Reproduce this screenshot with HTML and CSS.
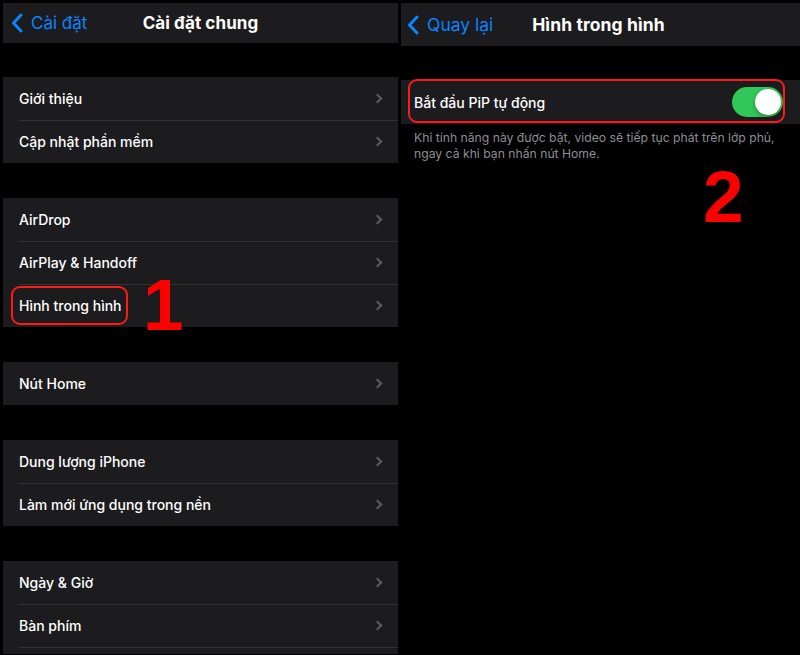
FILE: index.html
```html
<!DOCTYPE html>
<html lang="vi">
<head>
<meta charset="utf-8">
<link rel="stylesheet" href="styles.css">
</head>
<body>
<div class="screen">
  <section class="panel left">
    <header class="nav">
      <a class="back"><svg class="back-chev" viewBox="0 0 12 20" width="12" height="20"><path d="M10 2 L2.5 10 L10 18" fill="none" stroke="#0a84ff" stroke-width="3" stroke-linecap="round" stroke-linejoin="round"/></svg><span>Cài đặt</span></a>
      <h1 class="title">Cài đặt chung</h1>
    </header>
    <div class="group first">
      <div class="row"><span>Giới thiệu</span><i class="chev"></i></div>
      <div class="row"><span>Cập nhật phần mềm</span><i class="chev"></i></div>
    </div>
    <div class="group">
      <div class="row"><span>AirDrop</span><i class="chev"></i></div>
      <div class="row"><span>AirPlay &amp; Handoff</span><i class="chev"></i></div>
      <div class="row mark-row"><span>Hình trong hình</span><i class="chev"></i>
        <div class="mark mark-left"></div>
        <div class="step step-1">1</div>
      </div>
    </div>
    <div class="group">
      <div class="row"><span>Nút Home</span><i class="chev"></i></div>
    </div>
    <div class="group">
      <div class="row"><span>Dung lượng iPhone</span><i class="chev"></i></div>
      <div class="row"><span>Làm mới ứng dụng trong nền</span><i class="chev"></i></div>
    </div>
    <div class="group">
      <div class="row"><span>Ngày &amp; Giờ</span><i class="chev"></i></div>
      <div class="row"><span>Bàn phím</span><i class="chev"></i></div>
      <div class="row row-stub"></div>
    </div>
  </section>
  <section class="panel right">
    <header class="nav nav-r">
      <a class="back"><svg class="back-chev" viewBox="0 0 12 20" width="12" height="20"><path d="M10 2 L2.5 10 L10 18" fill="none" stroke="#0a84ff" stroke-width="3" stroke-linecap="round" stroke-linejoin="round"/></svg><span>Quay lại</span></a>
      <h1 class="title">Hình trong hình</h1>
    </header>
    <div class="group first-r">
      <div class="row row-r"><span>Bắt đầu PiP tự động</span>
        <div class="toggle"><div class="knob"></div></div>
        <div class="mark mark-right"></div>
      </div>
    </div>
    <p class="footer">Khi tính năng này được bật, video sẽ tiếp tục phát trên lớp phủ, ngay cả khi bạn nhấn nút Home.</p>
    <div class="step-wrap"><div class="step step-2">2</div></div>
  </section>
</div>
</body>
</html>
```
FILE: styles.css
```css
* { box-sizing: border-box; }
html, body { margin: 0; padding: 0; background: #000; }
body {
  width: 800px;
  height: 655px;
  overflow: hidden;
  font-family: Inter, "Noto Sans", "Liberation Sans", sans-serif;
  color: #fff;
}
.screen {
  display: flex;
  align-items: flex-start;
  gap: 3px;
  padding: 3px 0 0 3px;
  height: 655px;
  overflow: hidden;
}
.panel { display: flex; flex-direction: column; }
.panel > * { flex-shrink: 0; }
.left { width: 395px; }
.right { width: 399px; flex: 1; }

.nav {
  position: relative;
  height: 40px;
  background: #1c1c1e;
  display: flex;
  align-items: center;
  justify-content: center;
}
.nav-r { height: 43px; }
.back {
  position: absolute;
  left: 8px;
  top: 0;
  bottom: 0;
  display: flex;
  align-items: center;
  gap: 8px;
  color: #0a84ff;
  font-size: 17px;
  font-weight: 400;
}
.nav-r .back { left: 6px; gap: 8px; font-size: 17.5px; }
.back-chev { display: block; }
.title {
  margin: 0;
  font-size: 17px;
  font-weight: 700;
  letter-spacing: 0.1px;
}
.nav-r .title { font-size: 17.5px; margin-right: 4px; }

.group {
  background: #1c1c1e;
  margin-top: 35px;
}
.group.first { margin-top: 34px; }
.group.first-r { margin-top: 34px; }

.row {
  position: relative;
  height: 43px;
  display: flex;
  align-items: center;
  justify-content: space-between;
  padding: 0 14px 0 16px;
  font-size: 14px;
  font-weight: 500;
}
.row.row-stub { height: 7px; }
.row + .row::before {
  content: "";
  position: absolute;
  left: 16px;
  right: 0;
  top: 0;
  height: 1px;
  background: #323234;
}
.chev {
  display: block;
  width: 7px;
  height: 7px;
  border-right: 2px solid #5b5b5f;
  border-top: 2px solid #5b5b5f;
  transform: rotate(45deg);
  margin-right: 3px;
}

.row-r { height: 44px; padding: 0 17px 0 13px; font-size: 14px; }
.toggle {
  width: 51px;
  height: 30px;
  border-radius: 15px;
  background: #32c759;
  position: relative;
}
.knob {
  position: absolute;
  right: 2px;
  top: 2px;
  width: 26px;
  height: 26px;
  border-radius: 50%;
  background: #fff;
  box-shadow: 0 2px 4px rgba(0,0,0,0.3);
}

.mark {
  position: absolute;
  border: 2.5px solid #ff1a1a;
  border-radius: 9px;
  pointer-events: none;
}
.mark-left { left: 8px; top: 2px; width: 117px; height: 39px; }
.mark-right { left: 7px; top: -1px; width: 377px; height: 44px; }

.footer {
  margin: 6px 0 0;
  padding: 0 16px 0 13px;
  font-size: 12.2px;
  line-height: 16px;
  color: #8e8e93;
  font-weight: 400;
}

.step {
  position: absolute;
  font-family: "Liberation Sans", Arial, sans-serif;
  font-weight: 700;
  font-size: 73px;
  line-height: 1;
  color: #ff0000;
}
.step-1 { left: 140px; top: -16px; }
.step-wrap { position: relative; }
.step-2 { left: 302px; top: -2px; }
```
